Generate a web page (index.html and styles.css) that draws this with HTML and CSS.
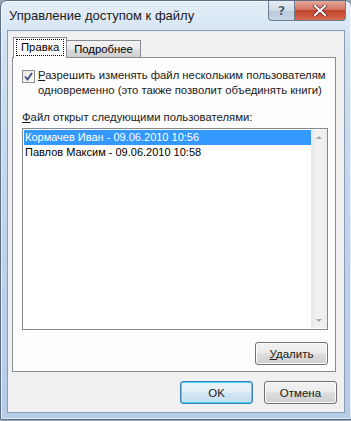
FILE: index.html
```html
<!DOCTYPE html>
<html lang="ru">
<head>
    <meta charset="UTF-8">
    <title>Управление доступом к файлу</title>
    <link rel="stylesheet" href="styles.css">
</head>
<body>
    <div class="window">
        <div class="titlebar">
            <span class="title">Управление доступом к файлу</span>
            <div class="caption-buttons">
                <span class="cap-btn help">?</span>
                <span class="cap-btn close">
                    <svg width="14" height="11" viewBox="0 0 14 11">
                        <path d="M2 1 L12 10 M12 1 L2 10" stroke="#5a2020" stroke-width="3.6" stroke-linecap="round"/>
                        <path d="M2 1 L12 10 M12 1 L2 10" stroke="#fff" stroke-width="2.2" stroke-linecap="round"/>
                    </svg>
                </span>
            </div>
        </div>

        <div class="client">
            <div class="tabs">
                <div class="tab active"><span class="focus">Правка</span></div>
                <div class="tab">Подробнее</div>
            </div>
            <div class="panel">
                <div class="check-row">
                    <span class="checkbox">
                        <svg width="9" height="9" viewBox="0 0 9 9">
                            <path d="M1 4.5 L3.5 7.5 L8 1" fill="none" stroke="#3b4e7a" stroke-width="1.8"/>
                        </svg>
                    </span>
                    <span class="check-label"><u>Р</u>азрешить изменять файл нескольким пользователям<br>одновременно (это также позволит объединять книги)</span>
                </div>

                <div class="list-label"><u>Ф</u>айл открыт следующими пользователями:</div>
                <div class="listbox">
                    <div class="list-items">
                        <div class="item selected">Кормачев Иван - 09.06.2010 10:56</div>
                        <div class="item">Павлов Максим - 09.06.2010 10:58</div>
                    </div>
                    <div class="scrollbar">
                        <span class="arrow up"></span>
                        <span class="arrow down"></span>
                    </div>
                </div>

                <div class="panel-actions">
                    <button class="btn"><u>У</u>далить</button>
                </div>
            </div>

            <div class="footer">
                <button class="btn default">OK</button>
                <button class="btn">Отмена</button>
            </div>
        </div>
    </div>
</body>
</html>
```

FILE: styles.css
```css
body, html {
    margin: 0;
    padding: 0;
}
body {
    width: 351px;
    height: 421px;
    background-color: #9aa6b3;
    font-family: "Liberation Sans", Arial, sans-serif;
    font-size: 11.3px;
    color: #000;
    overflow: hidden;
}
.window {
    box-sizing: border-box;
    width: 352px;
    height: 420px;
    padding: 0 6px 6px 6px;
    border: 1px solid #5d6f86;
    border-radius: 7px 7px 2px 2px;
    background: linear-gradient(180deg, #e4eef8 0%, #cfe0f1 12%, #bcd3ec 60%, #b5cde8 100%);
    box-shadow: inset 0 0 0 1px rgba(255,255,255,0.6);
    display: flex;
    flex-direction: column;
}
.titlebar {
    height: 29px;
    display: flex;
    justify-content: space-between;
    align-items: flex-start;
}
.title {
    margin-top: 7px;
    margin-left: 2px;
    font-size: 13px;
    color: #1a1a1a;
}
.caption-buttons {
    display: flex;
    margin-right: -1px;
}
.cap-btn {
    height: 19px;
    display: flex;
    align-items: center;
    justify-content: center;
    border: 1px solid #6b7b90;
    border-top: none;
}
.help {
    width: 25px;
    border-right: none;
    border-radius: 0 0 0 4px;
    background: linear-gradient(180deg, #e6edf5 0%, #cfdbe8 50%, #b8c8da 51%, #c8d6e6 100%);
    color: #555f6c;
    font-family: "DejaVu Sans", sans-serif;
    font-weight: bold;
    font-size: 13px;
    text-shadow: 0 0 2px #fff;
}
.close {
    width: 50px;
    border-radius: 0 0 4px 0;
    background: linear-gradient(180deg, #e5a89a 0%, #d47662 45%, #c2442c 50%, #d66a50 100%);
}
.client {
    flex: 1;
    box-sizing: border-box;
    background-color: #f0f0f0;
    border: 1px solid #8a9db3;
    padding: 6px 8px 8px 4px;
    display: flex;
    flex-direction: column;
}
.tabs {
    display: flex;
    align-items: flex-end;
    height: 20px;
    padding-left: 1px;
    position: relative;
    z-index: 1;
}
.tab {
    box-sizing: border-box;
    height: 17px;
    padding: 0 7px;
    border: 1px solid #898c95;
    border-bottom: none;
    border-left: none;
    background: linear-gradient(180deg, #f3f3f3 0%, #ebebeb 50%, #dddddd 51%, #cfcfcf 100%);
    line-height: 16px;
}
.tab.active {
    height: 21px;
    margin-bottom: -1px;
    padding: 2px 3px 0 3px;
    border-left: 1px solid #898c95;
    background: #fff;
    line-height: 15px;
}
.focus {
    display: inline-block;
    padding: 0 4px;
    outline: 1px dotted #000;
    outline-offset: 0;
}
.panel {
    box-sizing: border-box;
    height: 315px;
    background-color: #fdfdfd;
    border: 1px solid #898c95;
    padding: 10px 7px 6px 9px;
    display: flex;
    flex-direction: column;
}
.check-row {
    display: flex;
    align-items: flex-start;
    gap: 3px;
}
.checkbox {
    box-sizing: border-box;
    flex: none;
    width: 13px;
    height: 13px;
    margin-top: 2px;
    border: 1px solid #8f8f8f;
    background: linear-gradient(135deg, #e6e6e6 0%, #fbfbfb 100%);
    display: flex;
    align-items: center;
    justify-content: center;
}
.check-label {
    line-height: 15px;
    color: #1a1a1a;
    white-space: nowrap;
}
.list-label {
    margin-top: 12px;
    line-height: 15px;
    color: #1a1a1a;
}
.listbox {
    box-sizing: border-box;
    height: 204px;
    margin-top: 3px;
    border: 1px solid #828790;
    background: #fff;
    display: flex;
    padding: 1px 0 1px 1px;
}
.list-items {
    flex: 1;
}
.item {
    height: 15px;
    line-height: 15px;
    padding-left: 1px;
    font-size: 11px;
}
.item.selected {
    background-color: #3399ff;
    color: #fff;
}
.scrollbar {
    width: 16px;
    background: linear-gradient(90deg, #e8e8e8 0%, #f2f2f2 40%, #ececec 100%);
    display: flex;
    flex-direction: column;
    justify-content: space-between;
    align-items: center;
    padding: 6px 0;
}
.arrow {
    width: 0;
    height: 0;
    border-left: 3px solid transparent;
    border-right: 3px solid transparent;
}
.arrow.up {
    border-bottom: 3px solid #a7a7a7;
}
.arrow.down {
    border-top: 3px solid #a7a7a7;
}
.panel-actions {
    display: flex;
    justify-content: flex-end;
    margin-top: 12px;
}
.btn {
    box-sizing: border-box;
    width: 73px;
    height: 23px;
    padding: 0;
    font-family: "Liberation Sans", Arial, sans-serif;
    font-size: 11.5px;
    color: #1a1a1a;
    border: 1px solid #707070;
    border-radius: 3px;
    background: linear-gradient(180deg, #f2f2f2 0%, #ebebeb 48%, #dddddd 52%, #cfcfcf 100%);
    box-shadow: inset 0 0 0 1px #fcfcfc;
}
.btn.default {
    border-color: #3c7fb1;
    box-shadow: inset 0 0 0 1px #48d4f6;
    background: linear-gradient(180deg, #ecf5fa 0%, #e3eff7 48%, #d0e6f4 52%, #c4def0 100%);
}
.footer {
    margin-top: auto;
    margin-right: -1px;
    display: flex;
    justify-content: flex-end;
    gap: 11px;
}
```
